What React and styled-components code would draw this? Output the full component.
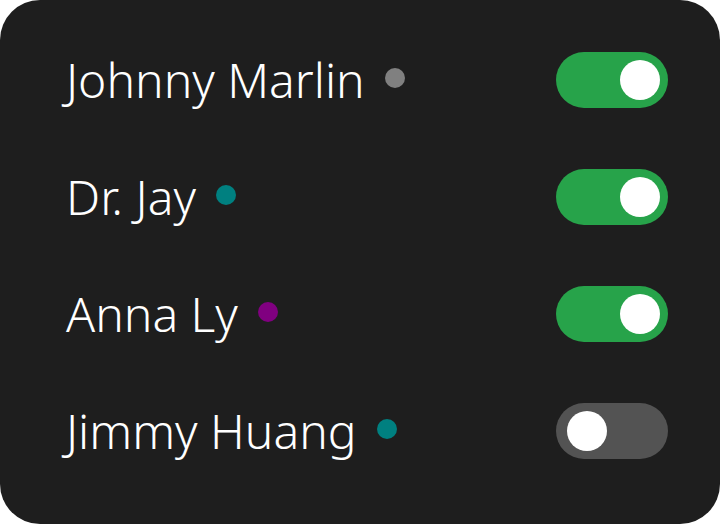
import React, {useState} from 'react';
import styled, {createGlobalStyle} from 'styled-components';

const Global = createGlobalStyle`
  html, body {
    margin: 0;
    padding: 0;
    background: #ffffff;
  }
  * { box-sizing: border-box; }
`

const Card = styled.div`
  width: 720px;
  height: 524px;
  background-color: #1e1e1e;
  border-radius: 40px;
  padding: 52px 52px 0 66px;
  display: flex;
  flex-direction: column;
  gap: 61px;
  font-family: "Noto Sans", "Open Sans", sans-serif;
`

const Row = styled.div`
  display: flex;
  align-items: center;
  justify-content: space-between;
  height: 56px;
`

const Name = styled.div`
  display: flex;
  align-items: center;
  gap: 20px;
  color: #ffffff;
  font-size: 48px;
  font-weight: 300;
  line-height: 56px;
`

const Dot = styled.span`
  width: 20px;
  height: 20px;
  border-radius: 50%;
  background-color: ${p => p.color};
  margin-top: -4px;
`

const Switch = styled.button`
  width: 112px;
  height: 56px;
  border: none;
  padding: 8px 8px 8px 11px;
  border-radius: 28px;
  background-color: ${p => p.on ? '#27a34a' : '#535353'};
  display: flex;
  justify-content: ${p => p.on ? 'flex-end' : 'flex-start'};
  align-items: center;
  cursor: pointer;
  & > span {
    width: 40px;
    height: 40px;
    border-radius: 50%;
    background: #ffffff;
  }
`

const people = [
    {name: "Johnny Marlin", color: "#808080", on: true},
    {name: "Dr. Jay", color: "#008080", on: true},
    {name: "Anna Ly", color: "#800080", on: true},
    {name: "Jimmy Huang", color: "#008080", on: false},
];

const App = () => {
    const [state, setState] = useState(people.map(p => p.on));

    const toggle = (idx) => {
        setState(state.map((v, i) => i === idx ? !v : v));
    }

    return (
        <>
            <Global/>
            <Card>
                {
                    people.map((elt, idx) =>
                        <Row key={idx}>
                            <Name>{elt.name}<Dot color={elt.color}/></Name>
                            <Switch on={state[idx] ? 1 : 0} onClick={() => toggle(idx)}><span/></Switch>
                        </Row>)
                }
            </Card>
        </>
    );
};

export default App;
